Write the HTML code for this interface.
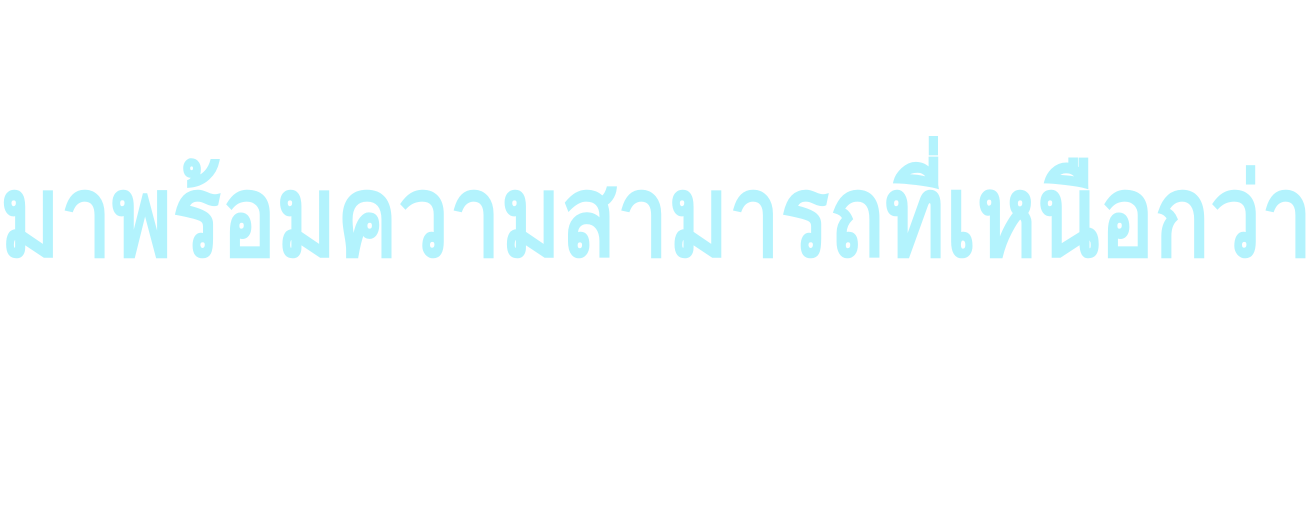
<!DOCTYPE html>
<html><head><meta charset="utf-8"><style>
html,body{margin:0;padding:0;background:#fff;width:1313px;height:531px;overflow:hidden}
.t{position:absolute;left:0;top:160px;white-space:nowrap;font-family:"Liberation Sans","DejaVu Sans",sans-serif;font-size:115px;font-weight:700;color:#b3f3fd;line-height:1;transform-origin:0 0;transform:scaleX(0.75)}
</style></head><body>
<div class="t" id="t">มาพร้อมความสามารถที่เหนือกว่า</div>
<script>
var t=document.getElementById('t');var w=t.scrollWidth;if(w>0){t.style.transform='scaleX('+(1313/w)+')';}
</script>
</body></html>
